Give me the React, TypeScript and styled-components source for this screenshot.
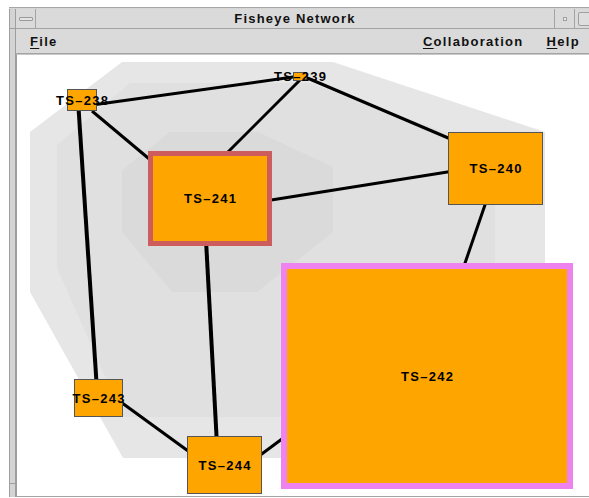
import styled, { createGlobalStyle } from 'styled-components';

const GlobalStyle = createGlobalStyle`
  html, body {
    margin: 0;
    padding: 0;
    background: #ffffff;
    overflow: hidden;
  }
  body {
    font-family: "Liberation Sans", Arial, sans-serif;
  }
`;

type TNode = {
  id: string;
  x: number;
  y: number;
  w: number;
  h: number;
  border?: string;
  bw?: number;
};

const NODES: TNode[] = [
  { id: 'TS–238', x: 50, y: 34, w: 30, h: 22 },
  { id: 'TS–239', x: 276, y: 17, w: 14, h: 9 },
  { id: 'TS–240', x: 431, y: 77, w: 95, h: 73 },
  { id: 'TS–241', x: 131, y: 96, w: 124, h: 95, border: '#cd5c5c', bw: 5 },
  { id: 'TS–242', x: 264, y: 208, w: 292, h: 226, border: '#ee82ee', bw: 6 },
  { id: 'TS–243', x: 57, y: 324, w: 49, h: 38 },
  { id: 'TS–244', x: 170, y: 381, w: 75, h: 58 },
];

// edge endpoints in canvas coordinates, the ends sit under the node boxes
const EDGES: [number, number, number, number, number][] = [
  [68, 51, 283, 21, 3],
  [75, 56, 143, 113, 3],
  [61, 45, 80, 335, 4],
  [286, 22, 205, 103, 3],
  [288, 22, 443, 88, 3],
  [248, 146, 443, 115, 3],
  [470, 144, 446, 214, 3],
  [189, 185, 200, 390, 4],
  [101, 345, 178, 401, 3],
  [238, 404, 273, 378, 3],
];

const HULLS = [
  { fill: '#e6e6e6', points: '105,7 316,7 528,77 528,403 106,403 13,237 13,77' },
  { fill: '#e0e0e0', points: '40,90 113,28 293,28 478,95 478,362 106,362 40,213' },
  { fill: '#dadada', points: '105,115 153,77 241,77 316,112 316,177 240,237 155,237 105,177' },
];

function MenuLabel({ text }: { text: string }): JSX.Element {
  return (
    <StyledMenuItem>
      <u>{text[0]}</u>
      {text.slice(1)}
    </StyledMenuItem>
  );
}

export default function App(): JSX.Element {
  return (
    <>
      <GlobalStyle />
      <StyledPage>
        <StyledWindow>
          <StyledSide />
          <StyledMain>
            <StyledTitleBar>
              <StyledMinButton>
                <StyledMinGlyph />
              </StyledMinButton>
              <StyledTitle>Fisheye Network</StyledTitle>
              <StyledMaxButton>
                <StyledMaxGlyph />
              </StyledMaxButton>
              <StyledCloseButton>
                <StyledCloseGlyph />
              </StyledCloseButton>
            </StyledTitleBar>
            <StyledMenuBar>
              <MenuLabel text="File" />
              <StyledSpacer />
              <MenuLabel text="Collaboration" />
              <MenuLabel text="Help" />
            </StyledMenuBar>
            <StyledCanvas>
              <StyledEdges width="576" height="441">
                {HULLS.map((hull) => (
                  <polygon key={hull.points} points={hull.points} fill={hull.fill} />
                ))}
                {EDGES.map(([x1, y1, x2, y2, sw], idx) => (
                  <line
                    key={`edge-${idx}`}
                    x1={x1}
                    y1={y1}
                    x2={x2}
                    y2={y2}
                    stroke="#000"
                    strokeWidth={sw}
                  />
                ))}
              </StyledEdges>
              {NODES.map((node) => (
                <StyledNode
                  key={node.id}
                  $x={node.x}
                  $y={node.y}
                  $w={node.w}
                  $h={node.h}
                  $border={node.border ?? '#555555'}
                  $bw={node.bw ?? 1}
                >
                  <StyledLabel>{node.id}</StyledLabel>
                </StyledNode>
              ))}
            </StyledCanvas>
          </StyledMain>
        </StyledWindow>
      </StyledPage>
    </>
  );
}

const StyledPage = styled.div`
  width: 589px;
  height: 498px;
  padding: 7px 0 0 9px;
  box-sizing: border-box;
  overflow: hidden;
`;

const StyledWindow = styled.div`
  display: flex;
  width: 584px;
  height: 490px;
  box-sizing: border-box;
  border-top: 1px solid #a6a6a6;
  padding-top: 1px;
  background: #d6d6d6;
`;

const StyledSide = styled.div`
  position: relative;
  flex: none;
  width: 7px;
  box-sizing: border-box;
  border-left: 1px solid #9e9e9e;
  border-right: 1px solid #9e9e9e;
  background: #d4d4d4;

  &::before,
  &::after {
    content: '';
    position: absolute;
    left: 0;
    right: 0;
    height: 1px;
    background: #9e9e9e;
  }
  &::before {
    top: 19px;
  }
  &::after {
    top: 474px;
  }
`;

const StyledMain = styled.div`
  display: flex;
  flex-direction: column;
  flex: none;
  width: 577px;
`;

const StyledTitleBar = styled.div`
  display: flex;
  height: 19px;
  border-bottom: 1px solid #a4a4a4;
  background: #dadada;
`;

const StyledMinButton = styled.div`
  display: flex;
  flex: none;
  align-items: center;
  justify-content: center;
  width: 19px;
  border-right: 1px solid #a4a4a4;
`;

const StyledMinGlyph = styled.div`
  width: 12px;
  height: 2px;
  border: 1px solid #9a9a9a;
  border-radius: 1px;
  background: #e4e4e4;
`;

const StyledTitle = styled.div`
  flex: 1;
  text-align: center;
  font-size: 13px;
  font-weight: bold;
  letter-spacing: 1.2px;
  line-height: 19px;
  color: #111;
`;

const StyledMaxButton = styled.div`
  display: flex;
  flex: none;
  align-items: center;
  justify-content: center;
  width: 19px;
  border-left: 1px solid #a4a4a4;
`;

const StyledMaxGlyph = styled.div`
  width: 2px;
  height: 2px;
  border: 1px solid #a0a0a0;
  background: #e8e8e8;
`;

const StyledCloseButton = styled.div`
  display: flex;
  flex: none;
  align-items: center;
  width: 19px;
  padding-left: 3px;
  box-sizing: border-box;
  border-left: 1px solid #a4a4a4;
`;

const StyledCloseGlyph = styled.div`
  flex: none;
  width: 16px;
  height: 12px;
  border: 1px solid #a0a0a0;
  border-radius: 2px;
  background: #dedede;
`;

const StyledMenuBar = styled.div`
  display: flex;
  align-items: center;
  gap: 23px;
  height: 24px;
  padding: 0 13px 0 14px;
  border-bottom: 1px solid #a4a4a4;
  background: #dadada;
`;

const StyledSpacer = styled.div`
  flex: 1;
`;

const StyledMenuItem = styled.span`
  font-size: 13px;
  font-weight: bold;
  letter-spacing: 1.3px;
  color: #111;

  u {
    text-underline-offset: 2px;
  }
`;

const StyledCanvas = styled.div`
  position: relative;
  flex: 1;
  background: #ffffff;
  border-top: 1px solid #c8c8c8;
  border-left: 1px solid #9e9e9e;
  border-bottom: 1px solid #a4a4a4;
  overflow: hidden;
`;

const StyledEdges = styled.svg`
  position: absolute;
  left: 0;
  top: 0;
  display: block;
`;

const StyledNode = styled.div<{
  $x: number;
  $y: number;
  $w: number;
  $h: number;
  $border: string;
  $bw: number;
}>`
  position: absolute;
  left: ${(p) => p.$x}px;
  top: ${(p) => p.$y}px;
  width: ${(p) => p.$w}px;
  height: ${(p) => p.$h}px;
  box-sizing: border-box;
  display: flex;
  align-items: center;
  justify-content: center;
  background: #ffa500;
  border: ${(p) => p.$bw}px solid ${(p) => p.$border};
`;

const StyledLabel = styled.span`
  flex: none;
  white-space: nowrap;
  font-size: 13px;
  font-weight: bold;
  letter-spacing: 1.3px;
  margin-right: -1.3px;
  line-height: 13px;
  color: #000;
`;
